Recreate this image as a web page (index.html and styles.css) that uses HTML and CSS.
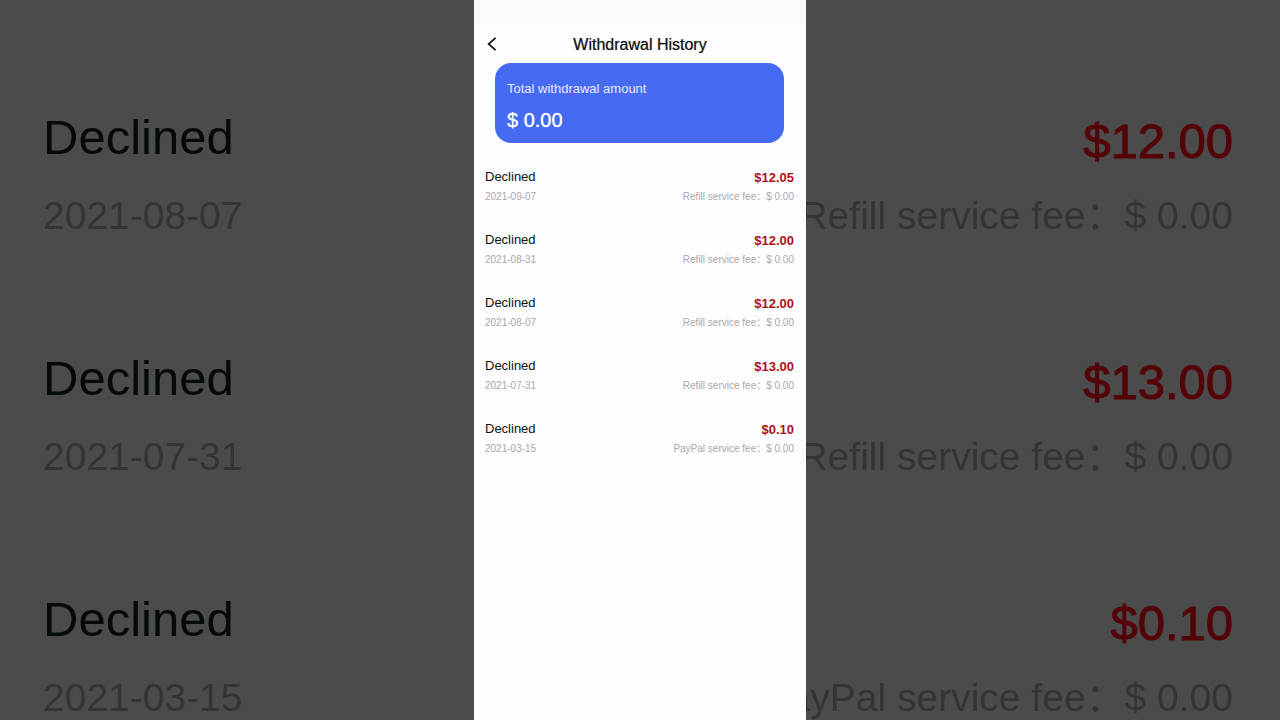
FILE: index.html
```html
<!DOCTYPE html>
<html lang="en">
<head>
<meta charset="utf-8">
<meta name="viewport" content="width=device-width, initial-scale=1.0" />
<title>Withdrawal History</title>
<link rel="stylesheet" href="styles.css">
</head>
<body>
<!-- enlarged rows behind the phone -->
<div class="backdrop" aria-hidden="true">
	<div class="row">
		<div class="left"><p class="status">Declined</p><p class="date">2021-08-07</p></div>
		<div class="right"><p class="amount">$12.00</p><p class="fee">Refill service fee：$ 0.00</p></div>
	</div>
	<div class="row">
		<div class="left"><p class="status">Declined</p><p class="date">2021-07-31</p></div>
		<div class="right"><p class="amount">$13.00</p><p class="fee">Refill service fee：$ 0.00</p></div>
	</div>
	<div class="row">
		<div class="left"><p class="status">Declined</p><p class="date">2021-03-15</p></div>
		<div class="right"><p class="amount">$0.10</p><p class="fee">PayPal service fee：$ 0.00</p></div>
	</div>
</div>

<main class="phone">
	<div class="statusbar"></div>
	<header class="header">
		<button class="back" type="button" aria-label="Back">
			<svg width="12" height="14" viewBox="0 0 12 14"><path d="M9.6 .8L2.6 7l7 6.2" fill="none" stroke="#111" stroke-width="1.7"/></svg>
		</button>
		<h1 class="title">Withdrawal History</h1>
	</header>
	<section class="card">
		<p class="card-label">Total withdrawal amount</p>
		<p class="card-total">$ 0.00</p>
	</section>
	<div class="list">
		<div class="row">
			<div class="left"><p class="status">Declined</p><p class="date">2021-09-07</p></div>
			<div class="right"><p class="amount">$12.05</p><p class="fee">Refill service fee：$ 0.00</p></div>
		</div>
		<div class="row">
			<div class="left"><p class="status">Declined</p><p class="date">2021-08-31</p></div>
			<div class="right"><p class="amount">$12.00</p><p class="fee">Refill service fee：$ 0.00</p></div>
		</div>
		<div class="row">
			<div class="left"><p class="status">Declined</p><p class="date">2021-08-07</p></div>
			<div class="right"><p class="amount">$12.00</p><p class="fee">Refill service fee：$ 0.00</p></div>
		</div>
		<div class="row">
			<div class="left"><p class="status">Declined</p><p class="date">2021-07-31</p></div>
			<div class="right"><p class="amount">$13.00</p><p class="fee">Refill service fee：$ 0.00</p></div>
		</div>
		<div class="row">
			<div class="left"><p class="status">Declined</p><p class="date">2021-03-15</p></div>
			<div class="right"><p class="amount">$0.10</p><p class="fee">PayPal service fee：$ 0.00</p></div>
		</div>
	</div>
</main>
</body>
</html>
```

FILE: styles.css
```css
* {box-sizing: border-box;}
body, p, h1 {margin: 0; padding: 0;}

body{
	background: #4b4b4b;
	font-family: "Liberation Sans", Arial, "Noto Sans CJK SC", sans-serif;
}

/* rows, shared by the list and the backdrop */
.row{
	display: flex;
	justify-content: space-between;
	align-items: flex-end;
	white-space: nowrap;
}
.left, .right{
	display: flex;
	flex-direction: column;
}
.left{gap: 6px;}
.right{
	gap: 5px;
	text-align: right;
}
.status{
	font-size: 13px;
	line-height: 16px;
	color: #0a1412;
}
.date, .fee{
	font-size: 10px;
	line-height: 12px;
	color: #a9a9ab;
}
.amount{
	font-size: 13px;
	line-height: 16px;
	font-weight: bold;
	color: #b01018;
}

/* backdrop */
.backdrop{
	position: fixed;
	inset: 0;
	overflow: hidden;
	display: flex;
	flex-direction: column;
	gap: 110px;
	padding: 109px 47px 0 43px;
}
.backdrop .left{gap: 27px;}
.backdrop .right{gap: 23px;}
.backdrop .status, .backdrop .amount{
	font-size: 49px;
	line-height: 56px;
}
.backdrop .date, .backdrop .fee{
	font-size: 39px;
	line-height: 48px;
	color: #343434;
}
.backdrop .status{color: #050a09;}
.backdrop .amount{
	font-weight: normal;
	-webkit-text-stroke: 1px #540308;
	color: #540308;
}

/* phone */
.phone{
	position: relative;
	width: 100%;
	max-width: 332px;
	min-height: 100vh;
	margin: 0 auto;
	background: #fdfcfe;
}
.statusbar{
	height: 24px;
	background: #fafafa;
}
.header{
	display: grid;
	grid-template-columns: 1fr auto 1fr;
	align-items: start;
	padding: 9px 12px 6px;
}
.back{
	justify-self: start;
	display: flex;
	padding: 4px 0;
	border: none;
	background: none;
	cursor: pointer;
}
.title{
	font-size: 16px;
	line-height: 24px;
	font-weight: normal;
	text-shadow: 0 0 1px #888;
	color: #111;
}
.card{
	display: flex;
	flex-direction: column;
	gap: 11px;
	margin: 0 22px 0 21px;
	padding: 18px 12px 11px;
	border-radius: 16px;
	background: #466af2;
	color: #fff;
}
.card-label{
	font-size: 13px;
	line-height: 16px;
	color: #e6ebff;
}
.card-total{
	font-size: 20px;
	line-height: 24px;
	text-shadow: 0 0 1px #cbd6ff;
}
.list{
	display: flex;
	flex-direction: column;
	gap: 29px;
	padding: 26px 12px 24px 11px;
}
```
